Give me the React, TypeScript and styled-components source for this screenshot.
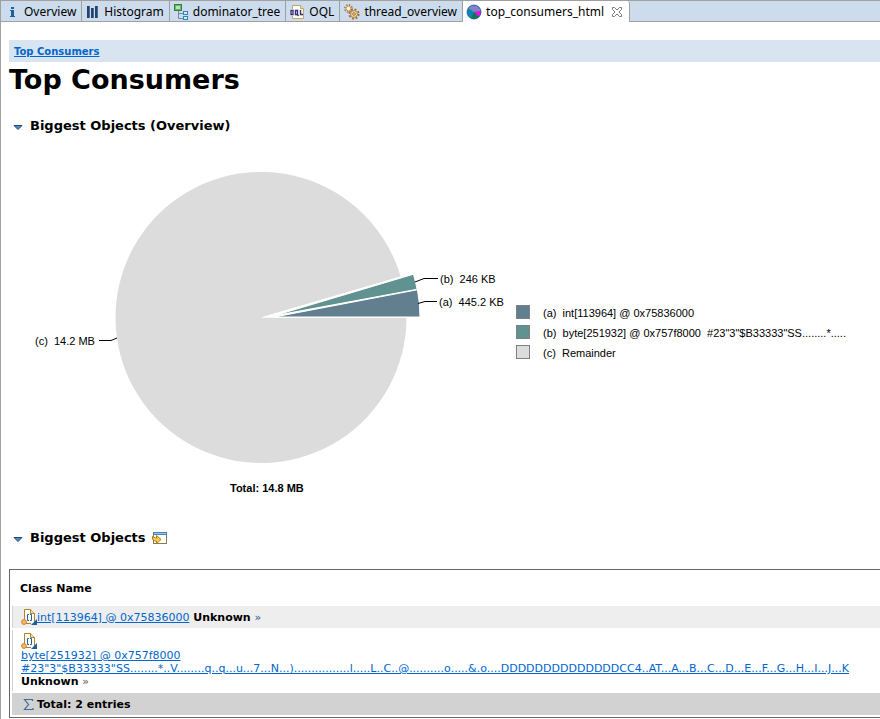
import React from "react";
import styled, { createGlobalStyle } from "styled-components";

const Global = createGlobalStyle`
  * { box-sizing: border-box; }
  html, body { height: 100%; }
  body {
    margin: 0;
    background: #fff;
    color: #000;
    font-family: "DejaVu Sans", Verdana, sans-serif;
    font-size: 11px;
    line-height: 13px;
    overflow: hidden;
  }
  #root { min-height: 100%; display: flex; }
`;

const Editor = styled.div`
  flex: 1;
  min-width: 0;
  min-height: 100vh;
  border-left: 1px solid #a0a0a0;
`;

const TabBar = styled.div`
  display: flex;
  height: 22px;
  background: #cddcec;
  border-top: 1px solid #a0a0a0;
  border-bottom: 1px solid #a0a0a0;
`;

const Tab = styled.button<{ $active?: boolean }>`
  display: flex;
  align-items: center;
  gap: 4px;
  height: ${(p) => (p.$active ? "21px" : "20px")};
  padding: ${(p) => (p.$active ? "1px 6px 0 3px" : "1px 5px 0 4px")};
  border: 0;
  border-right: 1px solid #a0a0a0;
  border-radius: ${(p) => (p.$active ? "0 3px 0 0" : "0")};
  background: ${(p) => (p.$active ? "#fff" : "transparent")};
  color: #000;
  font: 12px/20px "Noto Sans", "Segoe UI", sans-serif;
  white-space: nowrap;
  svg { flex: none; display: block; }
`;

const CloseMark = styled.svg`
  margin-left: 3px;
`;

const Content = styled.main`
  padding: 18px 0 0 8px;
`;

const Breadcrumb = styled.nav`
  height: 22px;
  padding: 0 5px;
  background: #d8e5f0;
  font-size: 10px;
  line-height: 23px;
  font-weight: bold;
`;

const Link = styled.a`
  color: #0066cc;
  text-decoration: underline;
`;

const Title = styled.h1`
  margin: 0;
  font-size: 27px;
  line-height: 36px;
`;

const Heading = styled.h2`
  display: flex;
  align-items: center;
  gap: 6px;
  height: 16px;
  margin: 20px 0 0;
  font-size: 13px;
  line-height: 16px;
`;

const Toggle = styled.button`
  display: flex;
  align-items: center;
  width: 15px;
  height: 16px;
  padding: 3px 0 0 4px;
  border: 0;
  background: none;
`;

const ChartRow = styled.section`
  display: flex;
  align-items: flex-start;
  padding-bottom: 6px;
  font: 11px/20px "Liberation Sans", Arial, sans-serif;
`;

const PieChart = styled.svg`
  flex: none;
  display: block;
  font: 11px "Liberation Sans", Arial, sans-serif;
`;

const Legend = styled.ul`
  margin: 169px 0 0;
  padding: 0;
  list-style: none;
`;

const LegendItem = styled.li`
  display: flex;
  align-items: center;
  gap: 13px;
  height: 20px;
  white-space: pre;
`;

const Swatch = styled.span<{ $color: string }>`
  width: 14px;
  height: 14px;
  margin-bottom: 2px;
  border: 1px solid #808080;
  background: ${(p) => p.$color};
`;

const Table = styled.table`
  width: calc(100% + 4px);
  margin-top: 23px;
  border: 1px solid #666;
  border-collapse: separate;
  border-spacing: 2px;
  white-space: nowrap;
`;

const HeadCell = styled.th`
  height: 32px;
  padding: 0 8px;
  text-align: left;
`;

const Cell = styled.td<{ $tone?: string }>`
  height: 22px;
  padding: 3px 8px;
  border-left: 1px solid #d2d2d2;
  background: ${(p) => p.$tone || "#fff"};
  vertical-align: middle;
`;

const Line = styled.div`
  display: flex;
  align-items: center;
  height: 16px;
  svg { flex: none; }
`;

const Suffix = styled.b`
  white-space: pre;
`;

const More = styled.a<{ $visited?: boolean }>`
  color: ${(p) => (p.$visited ? "#6a4a4a" : "#2a5a8a")};
  text-decoration: none;
`;

const InfoIcon = () => (
  <svg width="15" height="16" viewBox="0 0 15 16">
    <path d="M6 3h3v2H6zM5 6h4v6h1v1H5v-1h1V7H5z" fill="#1a5f9e" />
  </svg>
);

const HistogramIcon = () => (
  <svg width="14" height="16" viewBox="0 0 14 16">
    <path d="M1 2h3v12H1zM5 4h3v10H5zM9 2h3v12H9z" fill="#23436f" />
    <path d="M3 2h1v12H3zM7 4h1v10H7zM11 2h1v12h-1z" fill="#4a6a95" />
  </svg>
);

const TreeIcon = () => (
  <svg width="15" height="16" viewBox="0 0 15 16">
    <path d="M4.500 7v7.500H10M4.500 9.500H10" fill="none" stroke="#7487a3" />
    <rect x="0.500" y="0.500" width="7" height="6" fill="#68b868" stroke="#338044" />
    <path d="M2 2h4v3H2z" fill="#b7e6aa" />
    <rect x="9.500" y="7.500" width="4" height="3" fill="#d5efff" stroke="#347fc0" />
    <rect x="9.500" y="12.500" width="4" height="3" fill="#d5efff" stroke="#347fc0" />
  </svg>
);

const OqlIcon = () => (
  <svg width="15" height="16" viewBox="0 0 15 16">
    <path d="M2.500 1.500h8l3 3v10h-11z" fill="#fffdf4" stroke="#c1a76b" />
    <path d="M10.500 1.500v3h3" fill="#f6e4ab" stroke="#c1a76b" />
    <path d="M0 5h13v7H0z" fill="#f4f1f4" />
    <path
      d="M1 6.500h2v4H1zM5.500 6.500h2v4h-2zM7 10l1.500 2M10.500 6v4.500H13"
      fill="none"
      stroke="#303070"
      strokeWidth="1.300"
    />
  </svg>
);

const GearsIcon = () => (
  <svg width="16" height="16" viewBox="0 0 16 16" fill="none">
    <circle cx="4.500" cy="4.500" r="3.600" stroke="#a87a4c" strokeWidth="1.600" strokeDasharray="1.500 1.320" />
    <circle cx="4.500" cy="4.500" r="2.300" fill="#fff2d6" stroke="#c79a62" />
    <circle cx="10" cy="10" r="4.700" stroke="#976839" strokeWidth="1.800" strokeDasharray="1.900 1.790" />
    <circle cx="10" cy="10" r="3.500" fill="#f3d596" stroke="#b58344" />
    <circle cx="10" cy="10" r="1.300" fill="#fff" stroke="#976839" />
  </svg>
);

const PieIcon = () => (
  <svg width="16" height="16" viewBox="0 0 16 16">
    <circle cx="8" cy="8" r="7" fill="#0d83b9" />
    <path d="M8 8L2 4a7 7 0 0 1 12.500 3z" fill="#8583c4" />
    <path d="M8 8l6.800-1A7 7 0 0 1 13 13z" fill="#ff00f0" />
    <path d="M8 8l5 5a7 7 0 0 1-8 1.200z" fill="#087d45" />
    <circle cx="8" cy="8" r="7" fill="none" stroke="#245e96" strokeWidth="0.800" />
  </svg>
);

const CloseIcon = () => (
  <CloseMark width="12" height="12" viewBox="0 0 12 12">
    <path
      d="M1.500 1.500h2L6 4l2.500-2.500h2v2L8 6l2.500 2.500v2h-2L6 8l-2.500 2.500h-2v-2L4 6 1.500 3.500z"
      fill="#fff"
      stroke="#777"
    />
  </CloseMark>
);

const Arrow = () => (
  <svg width="10" height="6" viewBox="0 0 10 6">
    <path d="M1 .5h8L5 4.500z" fill="#4f8fc0" stroke="#24427c" />
  </svg>
);

const OpenIcon = () => (
  <svg width="16" height="14" viewBox="0 0 16 14">
    <rect x="1.500" y="1.500" width="13" height="11" fill="#fffef5" stroke="#8a7a55" />
    <path d="M1 1h14v3H1z" fill="#4a82b8" />
    <path d="M2 2h12v1H2z" fill="#9cc7e8" />
    <path d="M.5 5.500l3 1.500h1V4.500l4.500 4-4.500 4V10h-2l-2-2z" fill="#f7cf58" stroke="#b47a17" />
  </svg>
);

const ArrayIcon = () => (
  <svg width="16" height="16" viewBox="0 0 16 16">
    <path d="M3.500 13V.5h6l4 4v9" fill="#fffdf5" stroke="#a9832f" />
    <path d="M9.500.5v4h4" fill="#f2dfa5" stroke="#a9832f" />
    <path d="M8 5.500H6.500v6H8M9 5.500h1.500v6H9" fill="none" stroke="#245d94" />
    <path d="M16 10v6h-6z" fill="#1d5ea0" />
    <path d="M3 14.500h7" stroke="#a9832f" />
    <circle cx="3" cy="13" r="2.400" fill="#f8b868" stroke="#d67b2f" />
  </svg>
);

const SigmaIcon = () => (
  <svg width="16" height="14" viewBox="0 0 16 14">
    <path d="M11.500 4V2.500h-8L7.500 7.500l-4 5h8.500V11" fill="none" stroke="#376d9e" strokeWidth="1.200" />
  </svg>
);

const tabs = [
  { label: "Overview", icon: <InfoIcon /> },
  { label: "Histogram", icon: <HistogramIcon /> },
  { label: "dominator_tree", icon: <TreeIcon /> },
  { label: "OQL", icon: <OqlIcon /> },
  { label: "thread_overview", icon: <GearsIcon /> },
  { label: "top_consumers_html", icon: <PieIcon />, active: true },
];

const legend = [
  { color: "#617f8f", text: "(a)  int[113964] @ 0x75836000" },
  { color: "#619292", text: '(b)  byte[251932] @ 0x757f8000  #23"3"$B33333"SS........*.....' },
  { color: "#dcdcdc", text: "(c)  Remainder" },
];

const arrayText =
  '#23"3"$B33333"SS........*..V........q..q...u...7...N...)................l.....L..C..@..........o.....&.o....DDDDDDDDDDDDDDCC4..AT...A...B...C...D...E...F...G...H...I...J...K';

const point = (cx: number, cy: number, r: number, deg: number) => {
  const a = (deg * Math.PI) / 180;
  return `${cx + r * Math.cos(a)} ${cy - r * Math.sin(a)}`;
};

const slice = (cx: number, cy: number, r: number, from: number, to: number) =>
  `M${cx} ${cy}L${point(cx, cy, r, from)}A${r} ${r} 0 ${to - from > 180 ? 1 : 0} 0 ${point(cx, cy, r, to)}Z`;

export default function App() {
  return (
    <>
      <Global />
      <Editor>
        <TabBar role="tablist">
          {tabs.map((t) => (
            <Tab key={t.label} role="tab" aria-selected={!!t.active} $active={t.active}>
              {t.icon}
              {t.label}
              {t.active && <CloseIcon />}
            </Tab>
          ))}
        </TabBar>
        <Content>
          <Breadcrumb>
            <Link href="#top">Top Consumers</Link>
          </Breadcrumb>
          <Title>Top Consumers</Title>
          <Heading>
            <Toggle aria-label="Collapse overview">
              <Arrow />
            </Toggle>
            Biggest Objects (Overview)
          </Heading>
          <ChartRow>
            <PieChart width="507" height="370" viewBox="9 134 507 370" role="img" aria-label="Biggest objects">
              <path d={slice(261, 317.5, 145.5, 16.4, 360)} fill="#dcdcdc" />
              <path d="M261 317.500L401 276.500L414 277L419 317.500z" fill="#fff" />
              <path d={slice(274, 315.8, 145.5, 10.5, 16.6)} fill="#619292" stroke="#fff" />
              <path d={slice(274.5, 317, 145.5, 0, 10.8)} fill="#617f8f" stroke="#fff" />
              <g fill="none" stroke="#000">
                <path d="M415 282l9-3.500h14" />
                <path d="M418 303.500l7-2h12" />
                <path d="M99 340.500h12l6-2.500" />
              </g>
              <text x="440" y="283">(b)&#160; 246 KB</text>
              <text x="439" y="306">(a)&#160; 445.2 KB</text>
              <text x="35" y="345">(c)&#160; 14.2 MB</text>
              <text x="230" y="492" fontWeight="bold">Total: 14.8 MB</text>
            </PieChart>
            <Legend>
              {legend.map((l) => (
                <LegendItem key={l.text}>
                  <Swatch $color={l.color} />
                  {l.text}
                </LegendItem>
              ))}
            </Legend>
          </ChartRow>
          <Heading>
            <Toggle aria-label="Collapse biggest objects">
              <Arrow />
            </Toggle>
            Biggest Objects
            <OpenIcon />
          </Heading>
          <Table>
            <thead>
              <tr>
                <HeadCell>Class Name</HeadCell>
              </tr>
            </thead>
            <tbody>
              <tr>
                <Cell $tone="#eeeeee">
                  <Line>
                    <ArrayIcon />
                    <Link href="#int">int[113964] @ 0x75836000</Link>
                    <Suffix> Unknown </Suffix>
                    <More href="#int-details">»</More>
                  </Line>
                </Cell>
              </tr>
              <tr>
                <Cell>
                  <Line>
                    <ArrayIcon />
                  </Line>
                  <Link href="#byte">
                    byte[251932] @ 0x757f8000
                    <br />
                    {arrayText}
                  </Link>
                  <br />
                  <Suffix>Unknown </Suffix>
                  <More $visited href="#byte-details">»</More>
                </Cell>
              </tr>
            </tbody>
            <tfoot>
              <tr>
                <Cell $tone="#d2d2d2">
                  <Line>
                    <SigmaIcon />
                    <b>Total: 2 entries</b>
                  </Line>
                </Cell>
              </tr>
            </tfoot>
          </Table>
        </Content>
      </Editor>
    </>
  );
}
